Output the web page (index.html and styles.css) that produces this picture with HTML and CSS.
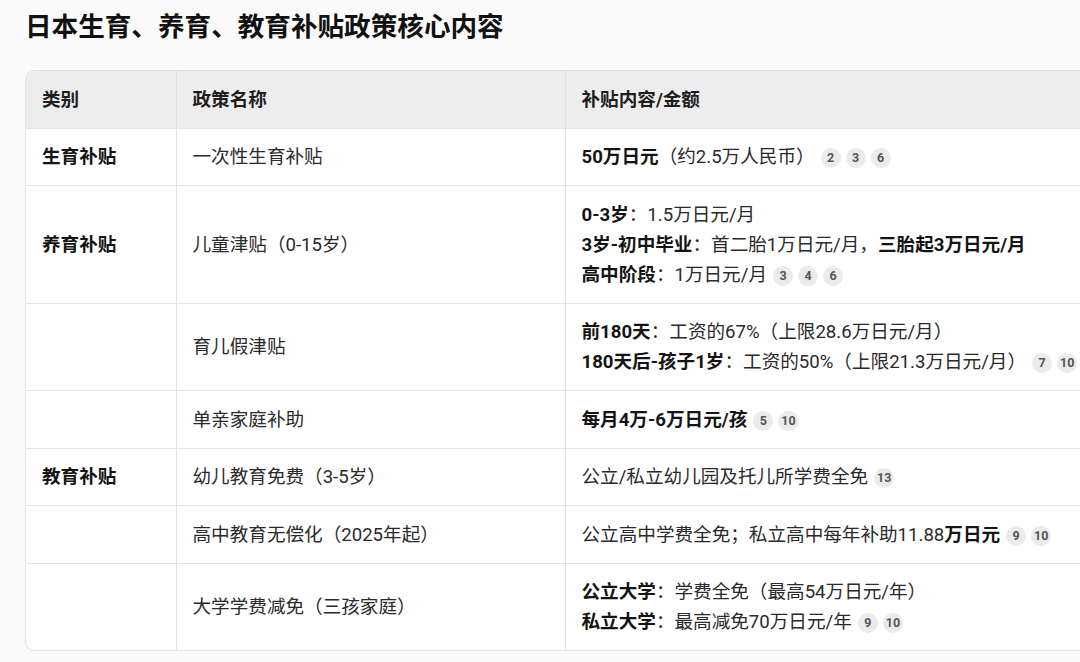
FILE: index.html
```html
<!DOCTYPE html>
<html lang="zh">
<head>
<meta charset="utf-8">
<title>日本生育、养育、教育补贴政策核心内容</title>
<link rel="stylesheet" href="styles.css">
</head>
<body>
<main class="page">
  <h1 class="title">日本生育、养育、教育补贴政策核心内容</h1>
  <div class="table-wrap">
    <table class="policy">
      <colgroup>
        <col class="c1"><col class="c2"><col class="c3">
      </colgroup>
      <thead>
        <tr><th>类别</th><th>政策名称</th><th>补贴内容/金额</th></tr>
      </thead>
      <tbody>
        <tr>
          <td class="cat">生育补贴</td>
          <td>一次性生育补贴</td>
          <td><b>50万日元</b>（约2.5万人民币）<span class="refs"><span class="ref">2</span><span class="ref">3</span><span class="ref">6</span></span></td>
        </tr>
        <tr>
          <td class="cat">养育补贴</td>
          <td>儿童津贴（0-15岁）</td>
          <td><b>0-3岁</b>：1.5万日元/月<br><b>3岁-初中毕业</b>：首二胎1万日元/月，<b>三胎起3万日元/月</b><br><b>高中阶段</b>：1万日元/月<span class="refs"><span class="ref">3</span><span class="ref">4</span><span class="ref">6</span></span></td>
        </tr>
        <tr>
          <td class="cat"></td>
          <td>育儿假津贴</td>
          <td><b>前180天</b>：工资的67%（上限28.6万日元/月）<br><b>180天后-孩子1岁</b>：工资的50%（上限21.3万日元/月）<span class="refs"><span class="ref">7</span><span class="ref">10</span></span></td>
        </tr>
        <tr>
          <td class="cat"></td>
          <td>单亲家庭补助</td>
          <td><b>每月4万-6万日元/孩</b><span class="refs"><span class="ref">5</span><span class="ref">10</span></span></td>
        </tr>
        <tr>
          <td class="cat">教育补贴</td>
          <td>幼儿教育免费（3-5岁）</td>
          <td>公立/私立幼儿园及托儿所学费全免<span class="refs"><span class="ref">13</span></span></td>
        </tr>
        <tr>
          <td class="cat"></td>
          <td>高中教育无偿化（2025年起）</td>
          <td>公立高中学费全免；私立高中每年补助11.88<b>万日元</b><span class="refs"><span class="ref">9</span><span class="ref">10</span></span></td>
        </tr>
        <tr>
          <td class="cat"></td>
          <td>大学学费减免（三孩家庭）</td>
          <td><b>公立大学</b>：学费全免（最高54万日元/年）<br><b>私立大学</b>：最高减免70万日元/年<span class="refs"><span class="ref">9</span><span class="ref">10</span></span></td>
        </tr>
      </tbody>
    </table>
  </div>
</main>
</body>
</html>
```

FILE: styles.css
```css
html, body {
  margin: 0;
  padding: 0;
  background: #fafafa;
  overflow: hidden;
}

body {
  font-family: Roboto, "Noto Sans CJK SC", sans-serif;
  color: #2a2a2a;
}

.page {
  padding: 9px 0 0 25px;
  width: 1140px;
}

.title {
  margin: 0;
  font-size: 26.6px;
  line-height: 36px;
  font-weight: 700;
  color: #111;
}

.table-wrap {
  margin-top: 25px;
  border: 1px solid #e3e3e3;
  border-radius: 9px;
  overflow: hidden;
  background: #fff;
  width: 1110px;
}

.policy {
  width: 100%;
  border-collapse: collapse;
  font-size: 18.6px;
  line-height: 30px;
}

.c1 { width: 150px; }
.c2 { width: 389px; }

.policy th,
.policy td {
  text-align: left;
  vertical-align: middle;
  padding: 13.5px 16px 13px 16px;
  border-left: 1px solid #e3e3e3;
  border-top: 1px solid #e3e3e3;
}

.policy tr > :first-child {
  border-left: none;
}

.policy thead th {
  border-top: none;
  background: #ededed;
  font-weight: 700;
  color: #1e1e1e;
}

.policy b,
.cat {
  font-weight: 700;
  color: #141414;
}

.refs {
  display: inline-flex;
  gap: 5px;
  margin-left: 6px;
  vertical-align: 1px;
}

.ref {
  display: inline-flex;
  align-items: center;
  justify-content: center;
  min-width: 20px;
  height: 20px;
  padding: 0 3px;
  box-sizing: border-box;
  border-radius: 10px;
  background: #ebebeb;
  color: #555;
  font-size: 12.5px;
  font-weight: 700;
  line-height: 1;
  font-family: Roboto, sans-serif;
}
```
